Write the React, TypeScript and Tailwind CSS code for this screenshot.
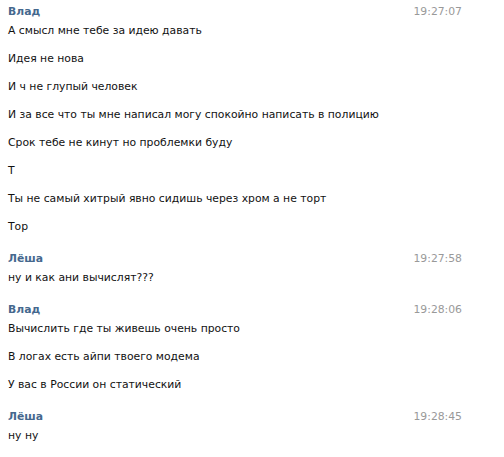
const GROUPS = [
  {
    name: 'Влад',
    time: '19:27:07',
    lines: [
      'А смысл мне тебе за идею давать',
      'Идея не нова',
      'И ч не глупый человек',
      'И за все что ты мне написал могу спокойно написать в полицию',
      'Срок тебе не кинут но проблемки буду',
      'Т',
      'Ты не самый хитрый явно сидишь через хром а не торт',
      'Тор',
    ],
  },
  { name: 'Лёша', time: '19:27:58', lines: ['ну и как ани вычислят???'] },
  {
    name: 'Влад',
    time: '19:28:06',
    lines: [
      'Вычислить где ты живешь очень просто',
      'В логах есть айпи твоего модема',
      'У вас в России он статический',
    ],
  },
  { name: 'Лёша', time: '19:28:45', lines: ['ну ну'] },
];

export default function App() {
  return (
    <div
      className="w-[504px] h-[457px] bg-white overflow-hidden pt-[5px] text-[10.8px] leading-[14px] text-[#111111]"
      style={{ fontFamily: '"DejaVu Sans", Verdana, sans-serif' }}
    >
      <div className="flex flex-col gap-[18px]">
        {GROUPS.map((g, i) => (
          <div key={i} className="pl-[8px] pr-[42px]">
            <div className="flex justify-between">
              <span className="font-bold text-[#45688e]">{g.name}</span>
              <span className="text-[#999999]">{g.time}</span>
            </div>
            <div className="mt-[5px] flex flex-col gap-[14px]">
              {g.lines.map((l, j) => (
                <div key={j}>{l}</div>
              ))}
            </div>
          </div>
        ))}
      </div>
    </div>
  );
}
